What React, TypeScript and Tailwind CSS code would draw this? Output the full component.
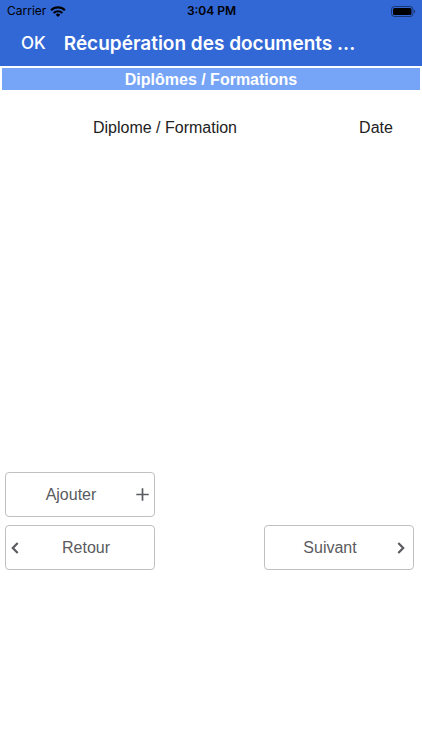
import type { ReactNode } from "react";

function StatusBar() {
  return (
    <div className="grid h-[22px] grid-cols-3 items-center pl-[7px] pr-[6px] text-black">
      <div className="flex items-center gap-1 text-xs">
        <span>Carrier</span>
        <svg className="h-[11px] w-4" viewBox="0 0 16 11" aria-hidden="true">
          <g fill="none" stroke="currentColor" strokeWidth="2.2">
            <path d="M1.1 4.2a9.9 9.9 0 0 1 13.8 0" />
            <path d="M3.7 7a6.1 6.1 0 0 1 8.6 0" />
          </g>
          <path d="M8 11 5.7 8.7a3.3 3.3 0 0 1 4.6 0Z" fill="currentColor" />
        </svg>
      </div>
      <span className="text-center text-xs font-semibold">3:04 PM</span>
      <svg className="h-[11px] w-[25px] justify-self-end" viewBox="0 0 25 11" aria-hidden="true">
        <rect x=".5" y=".5" width="21.5" height="10" rx="3" fill="none" stroke="#000" strokeOpacity=".45" />
        <rect x="2" y="2" width="18.5" height="7" rx="1.6" />
        <path d="M23.2 3.7c1.5.4 1.5 3.2 0 3.6Z" fillOpacity=".5" />
      </svg>
    </div>
  );
}

function PlusIcon() {
  return (
    <svg className="h-[13px] w-[13px]" viewBox="0 0 13 13" fill="none" stroke="currentColor" strokeWidth="1.7" aria-hidden="true">
      <path d="M6.5 .3v12.4M.3 6.5h12.4" />
    </svg>
  );
}

function ChevronIcon({ direction }: { direction: "left" | "right" }) {
  return (
    <svg className="h-3 w-2" viewBox="0 0 8 12" fill="none" stroke="currentColor" strokeWidth="2.2" aria-hidden="true">
      <path d={direction === "left" ? "M6.7 1 1.8 6l4.9 5" : "M1.3 1 6.2 6l-4.9 5"} />
    </svg>
  );
}

function ActionButton({ label, before, after }: { label: string; before?: ReactNode; after?: ReactNode }) {
  return (
    <button
      type="button"
      className="flex h-[45px] w-[150px] items-center rounded-[4px] border border-[#bfc0c3] bg-white px-[3px] text-base text-[#5a5b60]"
    >
      {before && <span className="flex w-3 shrink-0 justify-center">{before}</span>}
      <span className="flex-1">{label}</span>
      {after && <span className="flex w-[18px] shrink-0 justify-center">{after}</span>}
    </button>
  );
}

export default function App() {
  return (
    <div className="flex min-h-screen flex-col bg-white font-['Liberation_Sans',Arial,sans-serif]">
      <header className="h-[66px] bg-[#3267d6] font-['Inter',sans-serif]">
        <StatusBar />
        <div className="flex h-11 items-center gap-[18px] pl-[21px] pr-4 text-white">
          <button type="button" className="text-[17px] font-medium">OK</button>
          <h1 className="truncate text-[19px] leading-7 font-semibold">Récupération des documents ...</h1>
        </div>
      </header>
      <main className="px-[2px] pt-[2px]">
        <h2 className="h-[22px] bg-[#76a4f6] text-center text-base leading-[23px] font-bold text-white">
          Diplômes / Formations
        </h2>
        <table className="mt-[26px] w-full table-fixed text-base text-[#222]">
          <thead>
            <tr>
              <th scope="col" className="py-0 pr-1 pl-0 font-normal">Diplome / Formation</th>
              <th scope="col" className="w-[88px] p-0 font-normal">Date</th>
            </tr>
          </thead>
        </table>
        <div className="mt-[332px] flex flex-col gap-2 pl-[3px] pr-[6px]">
          <ActionButton label="Ajouter" after={<PlusIcon />} />
          <div className="flex justify-between">
            <ActionButton label="Retour" before={<ChevronIcon direction="left" />} />
            <ActionButton label="Suivant" after={<ChevronIcon direction="right" />} />
          </div>
        </div>
      </main>
    </div>
  );
}
